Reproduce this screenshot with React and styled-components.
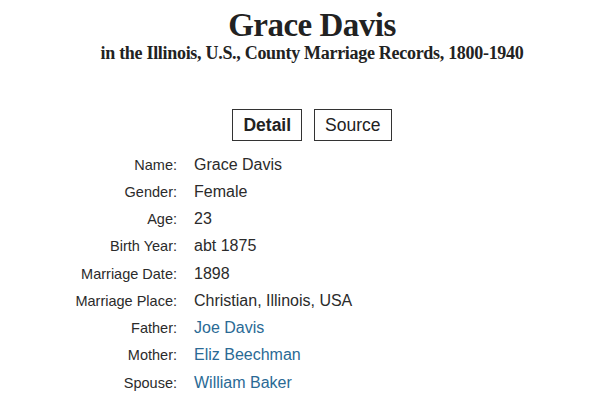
import React from 'react';
import styled, { createGlobalStyle } from 'styled-components';

const GlobalStyle = createGlobalStyle`
  html, body {
    margin: 0;
    padding: 0;
    background: #fff;
  }
`;

const Page = styled.div`
  width: 596px;
  height: 404px;
  box-sizing: border-box;
  padding-left: 28px;
  overflow: hidden;
  font-family: "Liberation Sans", Arial, sans-serif;
  color: #2b2b2b;
`;

const Header = styled.header`
  text-align: center;
  padding-top: 7px;
  font-family: "Liberation Serif", "Times New Roman", serif;
  color: #222;
`;

const Title = styled.h1`
  margin: 0;
  font-size: 33px;
  line-height: 36px;
  font-weight: bold;
  letter-spacing: -0.5px;
`;

const Subtitle = styled.h2`
  margin: 0;
  font-size: 18px;
  line-height: 20px;
  font-weight: bold;
  letter-spacing: -0.3px;
`;

const Tabs = styled.div`
  display: flex;
  justify-content: center;
  gap: 12px;
  margin-top: 46px;
`;

const Tab = styled.button`
  height: 32px;
  padding: 0 10px;
  border: 1px solid #333;
  background: #fff;
  font-family: inherit;
  font-size: 17.5px;
  color: #222;
  font-weight: ${p => (p.$active ? 'bold' : 'normal')};
  cursor: pointer;
`;

const Details = styled.dl`
  display: grid;
  grid-template-columns: 149px 1fr;
  grid-auto-rows: 27.25px;
  column-gap: 17px;
  align-items: center;
  margin: 10px 0 0;
`;

const Label = styled.dt`
  text-align: right;
  font-size: 14.5px;
  color: #2b2b2b;
`;

const Value = styled.dd`
  margin: 0;
  font-size: 16px;
  color: ${p => (p.$link ? '#2a6a95' : '#2b2b2b')};
`;

const rows = [
  ['Name', 'Grace Davis'],
  ['Gender', 'Female'],
  ['Age', '23'],
  ['Birth Year', 'abt 1875'],
  ['Marriage Date', '1898'],
  ['Marriage Place', 'Christian, Illinois, USA'],
  ['Father', 'Joe Davis', true],
  ['Mother', 'Eliz Beechman', true],
  ['Spouse', 'William Baker', true],
];

const App = () => {
  return (
    <Page>
      <GlobalStyle />
      <Header>
        <Title>Grace Davis</Title>
        <Subtitle>in the Illinois, U.S., County Marriage Records, 1800-1940</Subtitle>
      </Header>
      <Tabs>
        <Tab $active>Detail</Tab>
        <Tab>Source</Tab>
      </Tabs>
      <Details>
        {rows.map(([label, value, link]) => (
          <React.Fragment key={label}>
            <Label>{label}:</Label>
            <Value $link={link}>{value}</Value>
          </React.Fragment>
        ))}
      </Details>
    </Page>
  );
};

export default App;
